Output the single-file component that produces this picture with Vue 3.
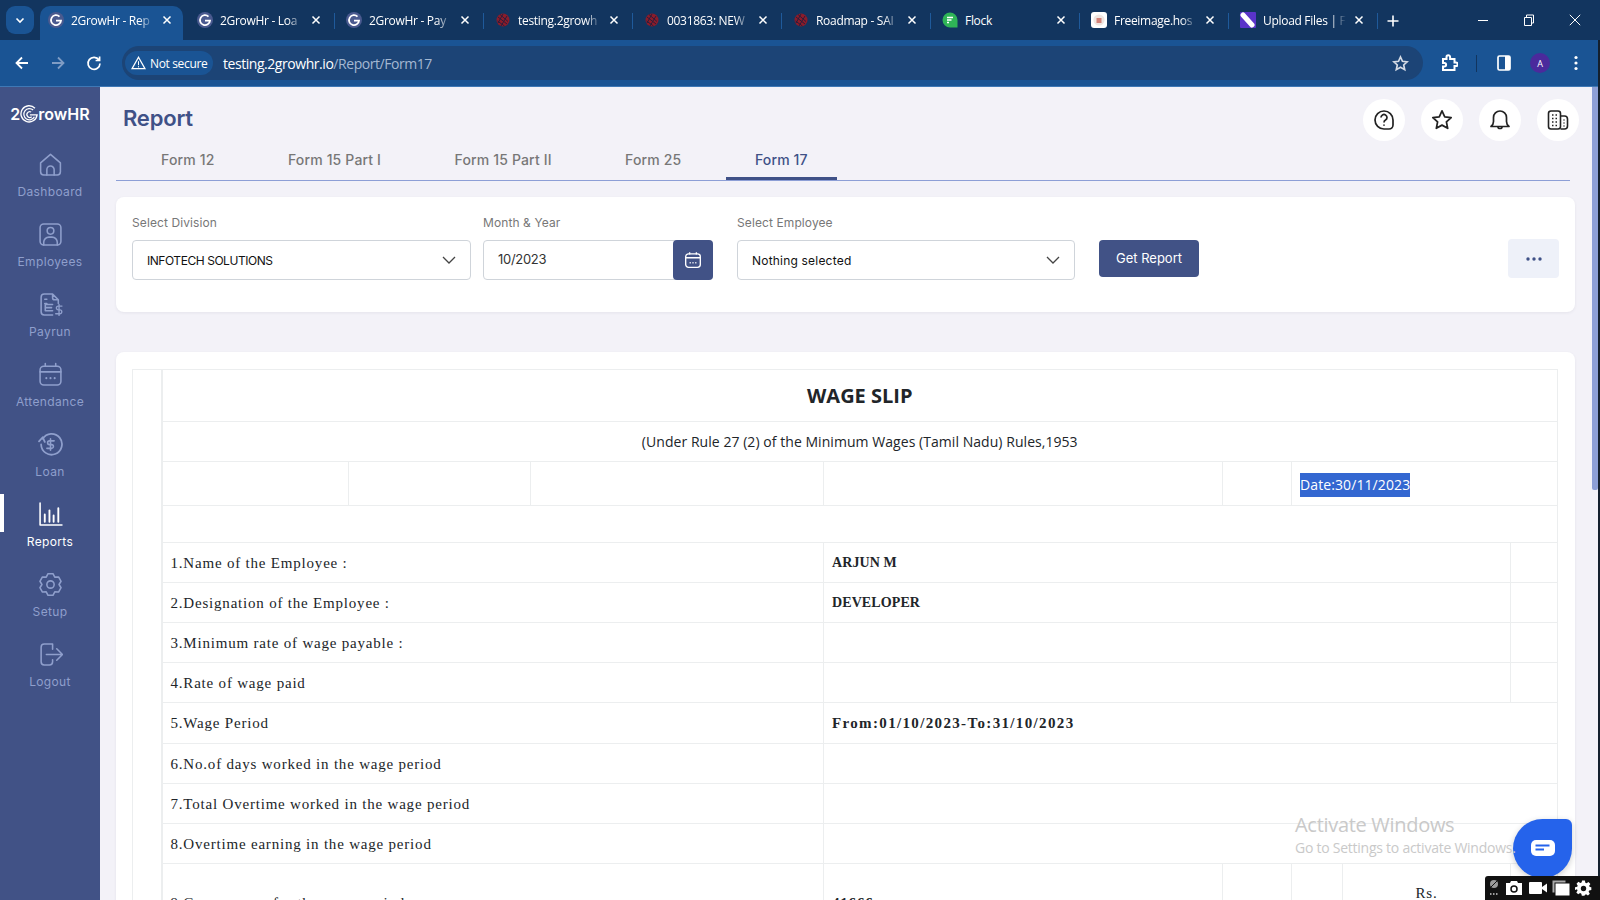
<script setup>
const tabs = [
  { title: '2GrowHr - Rep', icon: 'grow', active: true },
  { title: '2GrowHr - Loa', icon: 'grow' },
  { title: '2GrowHr - Pay', icon: 'grow' },
  { title: 'testing.2growh', icon: 'mantis' },
  { title: '0031863: NEW', icon: 'mantis' },
  { title: 'Roadmap - SAI', icon: 'mantis' },
  { title: 'Flock', icon: 'flock', plain: true },
  { title: 'Freeimage.hos', icon: 'free' },
  { title: 'Upload Files | F', icon: 'upload' },
]

const navItems = [
  { label: 'Dashboard', icon: 'home' },
  { label: 'Employees', icon: 'user' },
  { label: 'Payrun', icon: 'pay' },
  { label: 'Attendance', icon: 'cal' },
  { label: 'Loan', icon: 'loan' },
  { label: 'Reports', icon: 'chart', active: true },
  { label: 'Setup', icon: 'gear' },
  { label: 'Logout', icon: 'logout' },
]

const formTabs = [
  { label: 'Form 12' },
  { label: 'Form 15 Part I' },
  { label: 'Form 15 Part II' },
  { label: 'Form 25' },
  { label: 'Form 17', active: true },
]

const colWidths = [29, 187, 182, 293, 399, 69, 51, 168, 47]

const topRows = [
  { label: '1.Name of the Employee :', value: 'ARJUN M' },
  { label: '2.Designation of the Employee :', value: 'DEVELOPER' },
  { label: '3.Minimum rate of wage payable :', value: '' },
  { label: '4.Rate of wage paid', value: '' },
]

const wideRows = [
  { label: '5.Wage Period', value: 'From:01/10/2023-To:31/10/2023', tall: true },
  { label: '6.No.of days worked in the wage period', value: '' },
  { label: '7.Total Overtime worked in the wage period', value: '' },
  { label: '8.Overtime earning in the wage period', value: '' },
]

// six lobed cog for the Setup item
function cogPath() {
  const pts = []
  for (let i = 0; i < 6; i++) {
    const mid = -90 + i * 60
    for (const [off, r] of [[-30, 8.2], [-13, 10.6], [13, 10.6]]) {
      const a = ((mid + off) * Math.PI) / 180
      pts.push(`${(12 + r * Math.cos(a)).toFixed(2)} ${(12 + r * Math.sin(a)).toFixed(2)}`)
    }
  }
  return 'M' + pts.join('L') + 'z'
}
const cog = cogPath()
</script>

<template>
  <div class="screen">
    <header class="chrome">
      <div class="tabstrip">
        <button class="tab-search" type="button">
          <svg width="12" height="12" viewBox="0 0 12 12" fill="none"><path d="M2.5 4.5L6 8l3.5-3.5" stroke="#fff" stroke-width="1.6" /></svg>
        </button>
        <div
          v-for="tab in tabs"
          :key="tab.title"
          class="tab"
          :class="{ 'tab--active': tab.active }"
        >
          <svg class="favicon" width="16" height="16" viewBox="0 0 16 16">
            <template v-if="tab.icon === 'grow'">
              <circle cx="8" cy="8" r="8" fill="#4a5a8f" />
              <path d="M11.5 4.6A5 5 0 1 0 13 8.6H8" fill="none" stroke="#fff" stroke-width="1.8" />
            </template>
            <template v-else-if="tab.icon === 'mantis'">
              <circle cx="8" cy="8" r="6.5" fill="#8c1c2a" />
              <path d="M3 5l9 7M5 2.5l8 7M2.5 9l7 5M8 2l-5 9M12 4l-6 10" stroke="#2c1c3c" stroke-width="1" />
            </template>
            <template v-else-if="tab.icon === 'flock'">
              <path d="M8 0.5a7.5 7.5 0 0 1 7.5 7.5v7.5H8A7.5 7.5 0 0 1 8 .5z" fill="#2fb457" />
              <path d="M5 5.5h6M5 8h4.5M5 10.5h2" stroke="#fff" stroke-width="1.4" />
            </template>
            <template v-else-if="tab.icon === 'free'">
              <rect width="16" height="16" rx="3" fill="#fff" />
              <circle cx="8" cy="8" r="5.6" fill="#efe6e2" />
              <rect x="5.5" y="6" width="5" height="5" fill="#d4837a" />
            </template>
            <template v-else>
              <rect width="16" height="16" rx="1" fill="#5a34c9" />
              <path d="M3 3l9 10" stroke="#fff" stroke-width="5" stroke-linecap="round" />
            </template>
          </svg>
          <span class="tab__title" :class="{ 'tab__title--plain': tab.plain }">{{ tab.title }}</span>
          <svg class="tab__close" width="10" height="10" viewBox="0 0 10 10"><path d="M1.5 1.5l7 7M8.5 1.5l-7 7" stroke="#fff" stroke-width="1.5" /></svg>
        </div>
        <svg class="tab-new" width="14" height="14" viewBox="0 0 14 14"><path d="M7 1.5v11M1.5 7h11" stroke="#fff" stroke-width="1.6" /></svg>
        <div class="win-controls">
          <svg width="12" height="12" viewBox="0 0 12 12"><path d="M1 6.5h10" stroke="#fff" /></svg>
          <svg width="12" height="12" viewBox="0 0 12 12" fill="none"><path d="M1.5 3.5h7v8h-7zM3.5 3.5v-2.5h7v8h-2" stroke="#fff" /></svg>
          <svg width="12" height="12" viewBox="0 0 12 12"><path d="M.8.8l10.4 10.4M11.2.8L.8 11.2" stroke="#fff" /></svg>
        </div>
      </div>
      <div class="toolbar">
        <div class="nav-buttons">
          <svg width="16" height="16" viewBox="0 0 16 16" fill="none"><path d="M14 8H3M8 2.5L2.5 8 8 13.5" stroke="#fff" stroke-width="1.8" /></svg>
          <svg width="16" height="16" viewBox="0 0 16 16" fill="none"><path d="M2 8h11M8 2.5L13.5 8 8 13.5" stroke="#7f9cc4" stroke-width="1.8" /></svg>
          <svg width="16" height="16" viewBox="0 0 16 16" fill="none"><path d="M13 5a6 6 0 1 0 1 3.5M13.6 1.5V5.5H9.6" stroke="#fff" stroke-width="1.7" /></svg>
        </div>
        <div class="omnibox">
          <div class="secure-chip">
            <svg width="15" height="14" viewBox="0 0 15 14" fill="none"><path d="M7.5 1.3L14 12.7H1z" stroke="#fff" stroke-width="1.3" /><path d="M7.5 5.2v4M7.5 10.2v1.2" stroke="#fff" /></svg>
            <span>Not secure</span>
          </div>
          <span class="url">testing.2growhr.io<span class="url__path">/Report/Form17</span></span>
          <svg class="omni-star" width="17" height="17" viewBox="0 0 24 24" fill="none"><path d="M12 2.8l2.8 6.1 6.6.7-4.9 4.5 1.400 6.6-5.900-3.400-5.900 3.400 1.400-6.600-4.900-4.500 6.600-.7z" stroke="#d5dbe5" stroke-width="2.4" /></svg>
        </div>
        <div class="toolbar-actions">
          <svg class="act-puzzle" width="18" height="18" viewBox="0 0 18 18" fill="none"><path d="M3 5h3.500V3a1.800 1.800 0 0 1 3.600 0v2h4.400v3.500h1.400a1.800 1.800 0 0 1 0 3.600h-1.400V16H3v-3.600h1.400a1.700 1.700 0 0 0 0-3.400H3z" stroke="#fff" stroke-width="2" /></svg>
          <span class="toolbar-sep"></span>
          <svg class="act-panel" width="14" height="16" viewBox="0 0 14 16" fill="none"><rect x="1" y="1" width="12" height="14" rx="1.500" stroke="#fff" stroke-width="1.700" /><rect x="8" y="1" width="5" height="14" fill="#fff" /></svg>
          <span class="avatar">A</span>
          <svg class="act-menu" width="4" height="16" viewBox="0 0 4 16"><circle cx="2" cy="2.500" r="1.600" fill="#fff" /><circle cx="2" cy="8" r="1.600" fill="#fff" /><circle cx="2" cy="13.500" r="1.600" fill="#fff" /></svg>
        </div>
      </div>
    </header>

    <div class="page">
      <aside class="sidebar">
        <div class="logo">
          <span>2</span>
          <svg width="18" height="18" viewBox="0 0 20 20" fill="none" stroke="#fff">
            <path d="M16.600 3.600A9 9 0 1 0 19 11h-8" stroke-width="1.500" />
            <path d="M14.600 5.600A6.200 6.200 0 1 0 16 13" stroke-width="1.400" />
            <path d="M12.400 7.800A3.200 3.200 0 1 0 13 13" stroke-width="1.400" />
          </svg>
          <span>rowHR</span>
        </div>
        <nav class="nav">
          <a
            v-for="item in navItems"
            :key="item.label"
            class="nav__item"
            :class="{ 'nav__item--active': item.active }"
          >
            <svg class="nav__icon" viewBox="0 0 24 24" fill="none" stroke="currentColor" stroke-width="1.500" stroke-linejoin="round" stroke-linecap="round">
              <template v-if="item.icon === 'home'">
                <path d="M2.500 10.500L12 2.200l9.500 8.300V19a3 3 0 0 1-3 3h-13a3 3 0 0 1-3-3z" />
                <path d="M8.500 22v-5a3.500 3.500 0 0 1 7 0v5" />
              </template>
              <template v-else-if="item.icon === 'user'">
                <rect x="2" y="2" width="20" height="20" rx="3.500" />
                <circle cx="12" cy="8.500" r="3.200" />
                <path d="M5.500 22v-2.500a5 5 0 0 1 5-5h3a5 5 0 0 1 5 5V22" />
              </template>
              <template v-else-if="item.icon === 'pay'">
                <path d="M14 2H6a3 3 0 0 0-3 3v14a3 3 0 0 0 3 3h8M14 2l5.500 5.500V11M14 2v3.500a2 2 0 0 0 2 2h3.500" />
                <path d="M6.500 7h2M6.500 11h2M14 12H7v6h7M7 15h6" />
                <path d="M23 13.500h-3.500a1.700 1.700 0 0 0 0 3.700h1.500a1.700 1.700 0 0 1 0 3.700H17M20.200 12v10.500" stroke-width="1.300" />
              </template>
              <template v-else-if="item.icon === 'cal'">
                <rect x="2" y="4" width="20" height="18" rx="3.500" />
                <path d="M2 9.500h20M7 1.500V4M17 1.500V4" />
                <path d="M8 15.500h.01M12 15.500h.01M16 15.500h.01" stroke-width="2" />
              </template>
              <template v-else-if="item.icon === 'loan'">
                <path d="M4.500 6.500A10 10 0 1 1 3 12" stroke-width="1.700" />
                <path d="M1 9l3.500-4L6.500 9.500" stroke-width="1.700" />
                <path d="M15.500 8.500H11a1.800 1.800 0 0 0 0 3.600h2a1.800 1.800 0 0 1 0 3.600H8.500M12 6.500v11" stroke-width="1.500" />
              </template>
              <template v-else-if="item.icon === 'chart'">
                <path d="M2 1v21h21" />
                <path d="M6.500 19v-7M11 19V8M15 19v-6M19.500 19V6" stroke-width="1.800" />
              </template>
              <template v-else-if="item.icon === 'gear'">
                <path :d="cog" />
                <circle cx="12" cy="12" r="3.500" />
              </template>
              <template v-else>
                <path d="M14 2H6a3 3 0 0 0-3 3v14a3 3 0 0 0 3 3h5a3 3 0 0 0 3-3v-2M14 2v5" />
                <path d="M8 12h15M18 6.500l5.500 5.500-5.500 5.500" />
              </template>
            </svg>
            <span>{{ item.label }}</span>
          </a>
        </nav>
      </aside>

      <main class="main">
        <div class="head">
          <h1 class="head__title">Report</h1>
          <div class="head__actions">
            <span class="round-btn">
              <svg width="22" height="22" viewBox="0 0 22 22" fill="none" stroke="#222" stroke-width="1.700"><path d="M11 2a9 9 0 0 1 9 9v5a4 4 0 0 1-4 4h-5a9 9 0 0 1 0-18z" /><path d="M8 8.500a3 3 0 1 1 4.500 2.600c-1 .6-1.500 1.200-1.500 2.400M11 15.500v1.300" /></svg>
            </span>
            <span class="round-btn">
              <svg width="22" height="22" viewBox="0 0 24 24" fill="none" stroke="#222" stroke-width="1.900" stroke-linejoin="round"><path d="M12 2l3 6.500 7 .8-5.200 4.800 1.400 7L12 17.600 5.800 21.100l1.400-7L2 9.300l7-.8z" /></svg>
            </span>
            <span class="round-btn">
              <svg width="22" height="22" viewBox="0 0 22 22" fill="none" stroke="#222" stroke-width="1.700" stroke-linejoin="round"><path d="M2 17.500c1.500-1.200 2.500-3 2.500-5V8.500a6.500 6.500 0 0 1 13 0v4c0 2 1 3.800 2.500 5z" /><path d="M9 18c0 2 4 2 4 0" /></svg>
            </span>
            <span class="round-btn">
              <svg width="22" height="22" viewBox="0 0 22 22" fill="none" stroke="#222" stroke-width="1.600"><rect x="1.500" y="2" width="12" height="18" rx="2.500" /><path d="M13.500 7h4a3 3 0 0 1 3 3v7a3 3 0 0 1-3 3h-4" /><path d="M5 6h1.500M8.500 6H10M5 9.500h1.500M8.500 9.500H10M5 13h1.500M8.500 13H10M5 16.500h1.500M8.500 16.500H10M16.500 11h1M16.500 14h1M16.500 17h1" stroke-width="1.500" /></svg>
            </span>
          </div>
        </div>

        <div class="form-tabs">
          <span
            v-for="tab in formTabs"
            :key="tab.label"
            class="form-tab"
            :class="{ 'form-tab--active': tab.active }"
          >{{ tab.label }}</span>
        </div>

        <section class="card filters">
          <div class="field field--division">
            <label>Select Division</label>
            <div class="select">
              <span class="select__value--tight">INFOTECH SOLUTIONS</span>
              <svg width="14" height="8" viewBox="0 0 14 8" fill="none"><path d="M1 1l6 6 6-6" stroke="#444" stroke-width="1.300" /></svg>
            </div>
          </div>
          <div class="field field--month">
            <label>Month &amp; Year</label>
            <div class="month-input">
              <span class="month-input__value">10/2023</span>
              <button type="button" class="month-input__btn">
                <svg width="18" height="18" viewBox="0 0 16 16" fill="none" stroke="#fff" stroke-width="1.200"><rect x="1.500" y="2.500" width="13" height="12" rx="2.500" /><path d="M1.500 6h13M5 1v2M11 1v2" /><path d="M5 10.500h1M7.500 10.500h1M10 10.500h1" stroke-width="1.400" /></svg>
              </button>
            </div>
          </div>
          <div class="field field--employee">
            <label>Select Employee</label>
            <div class="select">
              <span class="select__value--wide">Nothing selected</span>
              <svg width="14" height="8" viewBox="0 0 14 8" fill="none"><path d="M1 1l6 6 6-6" stroke="#444" stroke-width="1.300" /></svg>
            </div>
          </div>
          <button type="button" class="get-report">Get Report</button>
          <button type="button" class="more-btn">
            <svg width="16" height="4" viewBox="0 0 16 4" fill="#3f5187"><circle cx="2" cy="2" r="1.700" /><circle cx="8" cy="2" r="1.700" /><circle cx="14" cy="2" r="1.700" /></svg>
          </button>
        </section>

        <section class="card sheet">
          <table class="wage">
            <colgroup>
              <col v-for="(w, i) in colWidths" :key="i" :style="{ width: w + 'px' }" />
            </colgroup>
            <tbody>
              <tr class="h52">
                <td class="gutter" rowspan="14"></td>
                <td colspan="8" class="wage__title">WAGE SLIP</td>
              </tr>
              <tr class="h40">
                <td colspan="8" class="wage__sub">(Under Rule 27 (2) of the Minimum Wages (Tamil Nadu) Rules,1953</td>
              </tr>
              <tr class="h44">
                <td></td>
                <td></td>
                <td></td>
                <td></td>
                <td></td>
                <td colspan="3" class="wage__date"><span>Date:30/11/2023</span></td>
              </tr>
              <tr class="h37">
                <td colspan="8"></td>
              </tr>
              <tr v-for="row in topRows" :key="row.label" class="h40">
                <td colspan="3" class="lbl">{{ row.label }}</td>
                <td colspan="4" class="val val--caps">{{ row.value }}</td>
                <td></td>
              </tr>
              <tr v-for="row in wideRows" :key="row.label" :class="row.tall ? 'h41' : 'h40'">
                <td colspan="3" class="lbl">{{ row.label }}</td>
                <td colspan="5" class="val val--digits">{{ row.value }}</td>
              </tr>
              <tr class="h60">
                <td colspan="3" class="lbl lbl--low">9.Gross wages for the wage period</td>
                <td class="val lbl--low">41666</td>
                <td></td>
                <td></td>
                <td class="rs">Rs.</td>
                <td></td>
              </tr>
            </tbody>
          </table>
        </section>
      </main>

      <div class="scrollbar"><div class="scrollbar__thumb"></div></div>
    </div>

    <div class="chat">
      <svg width="24" height="18" viewBox="0 0 24 18"><rect width="24" height="16" rx="5" fill="#fff" /><path d="M4.500 5.500h14M4.500 9.500H13" stroke="#2563eb" stroke-width="1.800" /></svg>
    </div>

    <div class="watermark">
      <div class="watermark__big">Activate Windows</div>
      <div class="watermark__small">Go to Settings to activate Windows.</div>
    </div>

    <div class="capture">
      <svg width="12" height="18" viewBox="0 0 12 18"><circle cx="6" cy="5" r="4" fill="#9a9a9a" /><path d="M3 8l6-6" stroke="#111" /><path d="M2 15h1.500M5 15h1.500M8 15h1.500" stroke="#ccc" stroke-width="1.500" /></svg>
      <svg width="18" height="14" viewBox="0 0 18 14"><path d="M1 2h4l1-2h6l1 2h4v12H1z" fill="#fff" /><circle cx="9" cy="8" r="3" fill="#fff" stroke="#111" stroke-width="1.500" /></svg>
      <svg width="18" height="12" viewBox="0 0 18 12"><rect width="13" height="12" rx="1" fill="#fff" /><path d="M13 5l5-3.500v9L13 7z" fill="#fff" /></svg>
      <svg width="18" height="16" viewBox="0 0 18 16"><path d="M.5.500h13v2H2.500v10h-2z" fill="#aaa" /><rect x="3.500" y="3.500" width="14" height="12" fill="#fff" /></svg>
      <svg width="17" height="17" viewBox="0 0 24 24" fill="#fff"><path d="M10 1h4l.7 3.200 1.800.8 2.800-1.800 2.800 2.800-1.800 2.800.8 1.800L23.500 11v4l-3.200.7-.8 1.800 1.800 2.800-2.800 2.800-2.800-1.800-1.800.8L13.500 23.500h-4l-.7-3.200-1.800-.8-2.800 1.800-2.800-2.800 1.800-2.800-.8-1.800L-.5 15v-4l3.200-.7.8-1.800-1.800-2.800 2.800-2.800 2.800 1.800 1.800-.8z" transform="translate(.5 -.2) scale(.96)" /><circle cx="12" cy="12" r="3.800" fill="#111" /></svg>
    </div>
  </div>
</template>

<style>
html,
body {
  margin: 0;
  overflow: hidden;
}
</style>

<style scoped>
.screen {
  position: relative;
  width: 1600px;
  height: 900px;
  overflow: hidden;
  display: flex;
  flex-direction: column;
  background: #f3f2f8;
  font-family: 'Inter', 'Liberation Sans', sans-serif;
}

/* thin dark edge of the window */
.screen::after {
  content: '';
  position: absolute;
  right: 0;
  top: 40px;
  bottom: 0;
  width: 2px;
  background: #14202e;
}

button {
  border: 0;
  padding: 0;
  font: inherit;
}

/* browser frame */
.chrome {
  flex: none;
  height: 87px;
  display: flex;
  flex-direction: column;
  font-family: 'Open Sans', 'Liberation Sans', sans-serif;
  color: #fff;
}

.tabstrip {
  height: 40px;
  background: #12355f;
  display: flex;
  align-items: flex-end;
  padding-left: 6px;
}

.tab-search {
  width: 28px;
  height: 28px;
  margin: 0 6px 6px 0;
  border-radius: 9px;
  background: #1a5494;
  display: flex;
  align-items: center;
  justify-content: center;
}

.tab {
  position: relative;
  flex: none;
  width: 149px;
  height: 34px;
  box-sizing: border-box;
  padding: 0 14px 6px 8px;
  display: flex;
  align-items: center;
  font-size: 12px;
  letter-spacing: -0.3px;
}

.tab::after {
  content: '';
  position: absolute;
  right: 0;
  top: 7px;
  height: 16px;
  width: 1px;
  background: #1f5a9b;
}

.tab--active {
  width: 143px;
  margin-right: 3px;
  padding-left: 5px;
  padding-right: 11px;
  background: #1a5494;
  border-radius: 10px 10px 0 0;
}

.tab--active::after {
  display: none;
}

.favicon {
  flex: none;
  margin-left: 3px;
}

.tab__title {
  flex: 1;
  margin-left: 7px;
  white-space: nowrap;
  overflow: hidden;
  -webkit-mask-image: linear-gradient(90deg, #000 82%, transparent 100%);
  mask-image: linear-gradient(90deg, #000 82%, transparent 100%);
}

.tab__title--plain {
  -webkit-mask-image: none;
  mask-image: none;
}

.tab__close {
  flex: none;
  margin-left: 8px;
}

.tab-new {
  margin: 0 0 12px 8px;
}

.win-controls {
  margin-left: auto;
  width: 138px;
  box-sizing: border-box;
  padding: 0 19px 0 15px;
  height: 40px;
  display: flex;
  align-items: center;
  justify-content: space-between;
  align-self: flex-start;
}

.toolbar {
  height: 47px;
  box-sizing: border-box;
  background: #1a5494;
  border-bottom: 1px solid #3f78b5;
  display: flex;
  align-items: flex-start;
  padding: 6px 0 0 14px;
}

.nav-buttons {
  width: 108px;
  height: 34px;
  display: flex;
  align-items: center;
  gap: 20px;
}

.omnibox {
  width: 1301px;
  height: 34px;
  box-sizing: border-box;
  padding: 0 14px 0 3px;
  border-radius: 17px;
  background: #1c4476;
  display: flex;
  align-items: center;
  font-size: 14px;
}

.secure-chip {
  width: 88px;
  height: 24px;
  box-sizing: border-box;
  padding-left: 6px;
  border-radius: 12px;
  background: #1a5494;
  display: flex;
  align-items: center;
  gap: 4px;
  font-size: 12px;
  letter-spacing: -0.35px;
}

.url {
  margin-left: 10px;
  letter-spacing: -0.45px;
}

.url__path {
  color: #a4b8d2;
}

.omni-star {
  margin-left: auto;
}

.toolbar-actions {
  flex: 1;
  height: 34px;
  display: flex;
  align-items: center;
}

.act-puzzle {
  margin-left: 17px;
}

.toolbar-sep {
  width: 1px;
  height: 17px;
  margin-left: 18px;
  background: #12355f;
}

.act-panel {
  margin-left: 20px;
}

.avatar {
  width: 20px;
  height: 20px;
  margin-left: 19px;
  border-radius: 50%;
  background: #4b2a9c;
  font-size: 9px;
  display: flex;
  align-items: center;
  justify-content: center;
}

.act-menu {
  margin-left: 24px;
}

/* app */
.page {
  flex: 1;
  min-height: 0;
  display: flex;
}

.sidebar {
  flex: none;
  width: 100px;
  background: #415286;
}

.logo {
  height: 48px;
  margin-top: 3px;
  display: flex;
  align-items: center;
  justify-content: center;
  gap: 0;
  color: #fff;
  font-size: 16px;
  font-weight: 600;
}

.nav {
  display: flex;
  flex-direction: column;
  margin-top: 12px;
}

.nav__item {
  height: 70px;
  display: flex;
  flex-direction: column;
  align-items: center;
  gap: 7px;
  box-sizing: border-box;
  padding-top: 2px;
  color: #8f9fcc;
  font-size: 12px;
  line-height: 15px;
  letter-spacing: 0.35px;
  position: relative;
}

.nav__item--active {
  color: #fff;
}

.nav__item--active::before {
  content: '';
  position: absolute;
  left: 0;
  top: -6px;
  width: 4px;
  height: 38px;
  background: #fff;
}

.nav__icon {
  flex: none;
  width: 25px;
  height: 25px;
}

.main {
  flex: 1;
  min-width: 0;
  padding: 0 17px 0 16px;
}

.head {
  height: 66px;
  display: flex;
  align-items: center;
  justify-content: space-between;
}

.head__title {
  margin: 0 0 0 7px;
  color: #3f5187;
  font-size: 22px;
  font-weight: 600;
  letter-spacing: -0.2px;
  transform: translateY(-2px);
}

.head__actions {
  display: flex;
  gap: 16px;
  margin-right: -4px;
}

.round-btn {
  width: 42px;
  height: 42px;
  border-radius: 50%;
  background: #fff;
  display: flex;
  align-items: center;
  justify-content: center;
}

.form-tabs {
  height: 27px;
  margin-right: 5px;
  display: flex;
  border-bottom: 1px solid #8d9fd6;
  padding-left: 16px;
}

.form-tab {
  height: 27px;
  box-sizing: border-box;
  padding: 0 29px;
  margin-right: 15.5px;
  color: #777;
  font-size: 14px;
  font-weight: 500;
  letter-spacing: 0.15px;
  line-height: 13px;
}

.form-tab--active {
  color: #3f5187;
  border-bottom: 3px solid #3f5187;
}

.card {
  background: #fff;
  border-radius: 8px;
  box-shadow: 0 1px 3px rgba(60, 60, 90, 0.08);
}

.filters {
  margin-top: 16px;
  height: 115px;
  box-sizing: border-box;
  padding: 18px 16px 0;
  display: flex;
  align-items: flex-start;
}

.field label {
  display: block;
  color: #777;
  font-size: 12px;
  letter-spacing: 0.1px;
  line-height: 16px;
  margin-bottom: 9px;
}

.field--division {
  width: 339px;
}

.field--month {
  width: 230px;
  margin-left: 12px;
}

.field--employee {
  width: 338px;
  margin-left: 24px;
}

.select,
.month-input {
  height: 40px;
  box-sizing: border-box;
  border: 1px solid #cfd4da;
  border-radius: 4px;
  display: flex;
  align-items: center;
  color: #111;
  font-size: 12px;
}

.select {
  justify-content: space-between;
  padding: 0 14px;
}

.select__value--tight {
  letter-spacing: -0.45px;
}

.select__value--wide {
  letter-spacing: 0.2px;
}

.month-input {
  padding-left: 14px;
  justify-content: space-between;
  font-size: 13px;
  color: #333;
}

.month-input__value {
  letter-spacing: -0.3px;
  padding-bottom: 2px;
}

.month-input__btn {
  width: 40px;
  height: 40px;
  margin: -1px;
  border-radius: 4px;
  background: #415286;
  display: flex;
  align-items: center;
  justify-content: center;
}

.get-report {
  width: 100px;
  height: 37px;
  margin: 25px 0 0 24px;
  padding-bottom: 1px;
  border-radius: 4px;
  background: #415286;
  color: #fff;
  font-size: 13px;
}

.more-btn {
  width: 51px;
  height: 39px;
  margin: 24px 0 0 auto;
  border-radius: 4px;
  background: #eef1f9;
  display: flex;
  align-items: center;
  justify-content: center;
}

.sheet {
  margin-top: 40px;
  height: 600px;
  padding: 17px 0 0 16px;
  box-sizing: border-box;
}

.wage {
  table-layout: fixed;
  width: 1425px;
  border-collapse: collapse;
  color: #212529;
}

.wage td {
  border: 1px solid #eceeef;
  padding: 0 8px;
  font-family: 'Open Sans', 'Liberation Sans', sans-serif;
  font-size: 14px;
}

.h52 { height: 52px; }
.h40 { height: 40px; }
.h41 { height: 41px; }
.h44 { height: 44px; }
.h37 { height: 37px; }
.h60 { height: 60px; }

.wage .gutter {
  padding: 0;
  border-bottom: 0;
  border-right-width: 2px;
}

.wage .wage__title {
  text-align: center;
  font-size: 20px;
  font-weight: 700;
}

.wage .wage__sub {
  text-align: center;
  font-size: 14px;
  letter-spacing: 0.05px;
}

.wage__date span {
  display: inline-block;
  line-height: 24px;
  background: #3367d1;
  color: #fff;
  font-size: 14px;
  letter-spacing: 0.1px;
  transform: translateY(1px);
}

.wage .lbl,
.wage .val,
.wage .rs {
  font-family: 'Liberation Serif', 'DejaVu Serif', serif;
  font-size: 15px;
  letter-spacing: 0.8px;
  padding-top: 1px;
}

.wage .val {
  font-weight: 700;
}

.wage .val--caps {
  font-size: 14px;
  letter-spacing: 0.1px;
}

.wage .val--digits {
  letter-spacing: 1.35px;
}

.wage .lbl--low {
  vertical-align: top;
  padding-top: 31px;
}

.wage .rs {
  text-align: center;
  vertical-align: top;
  padding-top: 21px;
}

.scrollbar {
  flex: none;
  width: 8px;
  background: #f3f2f8;
  position: relative;
}

.scrollbar__thumb {
  position: absolute;
  left: 0;
  top: 0;
  width: 6px;
  height: 403px;
  background: #8d9fd6;
  border-radius: 0 0 2px 2px;
}

/* overlays */
.watermark {
  position: absolute;
  left: 1295px;
  top: 811px;
  color: #c9c9c9;
  font-family: 'Open Sans', 'Liberation Sans', sans-serif;
  pointer-events: none;
}

.watermark__big {
  font-size: 20px;
  line-height: 27px;
  letter-spacing: -0.3px;
}

.watermark__small {
  font-size: 14px;
  line-height: 20px;
  letter-spacing: -0.25px;
}

.chat {
  position: absolute;
  left: 1513px;
  top: 819px;
  width: 59px;
  height: 59px;
  background: #2563eb;
  border-radius: 50% 6px 50% 50%;
  box-shadow: 0 2px 6px rgba(0, 0, 0, 0.2);
  display: flex;
  align-items: center;
  justify-content: center;
}

.capture {
  position: absolute;
  left: 1485px;
  top: 876px;
  width: 115px;
  height: 24px;
  box-sizing: border-box;
  padding: 0 8px 0 3px;
  background: #111;
  border-radius: 3px 0 0 0;
  display: flex;
  align-items: center;
  justify-content: space-between;
  z-index: 1;
}
</style>
